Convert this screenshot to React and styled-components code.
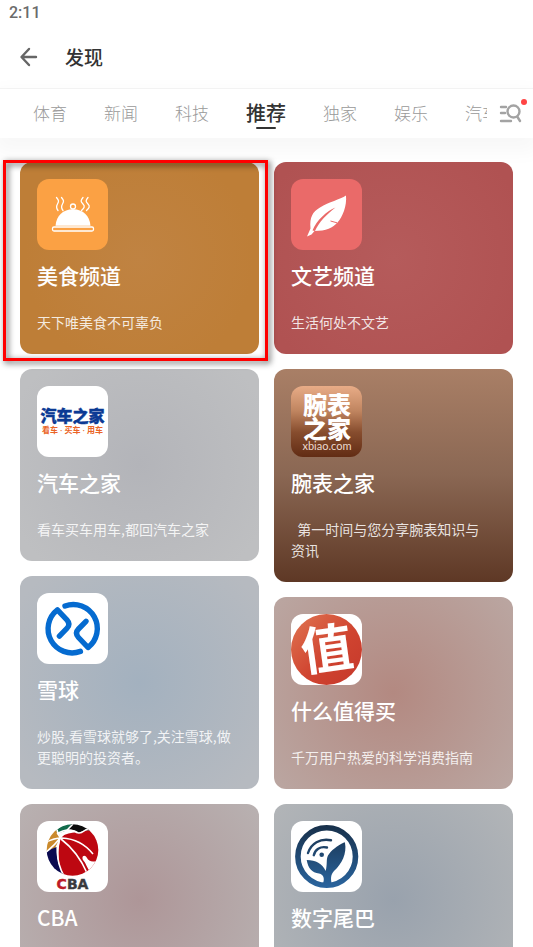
import React, {useState} from 'react'
import styled, {createGlobalStyle} from 'styled-components'

const GlobalStyle = createGlobalStyle`
    * {
        box-sizing: border-box;
    }

    body {
        margin: 0;
        background: #fff;
        font-family: Roboto, "Noto Sans CJK SC", sans-serif;
    }
`;

const Screen = styled.div`
    display: flex;
    flex-direction: column;
    height: 100vh;
    overflow: hidden;
`;

const StatusBar = styled.div`
    flex-shrink: 0;
    padding: 3px 9px;
    font-size: 16px;
    font-weight: 500;
    line-height: 20px;
    color: #6b6b6b;
`;

const Header = styled.header`
    display: flex;
    flex-shrink: 0;
    align-items: center;
    gap: 26px;
    height: 63px;
    padding: 0 18px;
    border-bottom: 1px solid #f5f5f5;
`;

const IconButton = styled.button`
    display: flex;
    align-items: center;
    justify-content: center;
    padding: 0;
    border: none;
    background: none;
    color: ${props => props.$color};
    cursor: pointer;
`;

const PageTitle = styled.h1`
    margin: 0;
    font-family: "Noto Sans CJK SC", sans-serif;
    font-size: 19px;
    font-weight: 500;
    line-height: 28px;
    color: #333;
`;

const TabBar = styled.div`
    position: relative;
    display: flex;
    height: 49px;
    flex-shrink: 0;
    background: #fff;
    box-shadow: 0 8px 18px 6px rgba(0, 0, 0, 0.03);
`;

const Tabs = styled.nav`
    display: flex;
    flex: 1;
    align-items: center;
    gap: 37px;
    min-width: 0;
    padding-left: 33px;
    overflow: hidden;
`;

const Tab = styled.button`
    display: flex;
    flex-direction: column;
    flex-shrink: 0;
    align-items: center;
    padding: 0;
    border: none;
    background: none;
    font-family: "Noto Sans CJK SC", sans-serif;
    font-size: ${props => props.$active ? "20px" : "17px"};
    font-weight: ${props => props.$active ? 500 : 300};
    line-height: 28px;
    color: ${props => props.$active ? "#333" : "#999"};
    cursor: pointer;

    &::after {
        content: "";
        width: 20px;
        height: 2px;
        border-radius: 1px;
        background: ${props => props.$active ? "#333" : "transparent"};
    }
`;

const TabTools = styled.div`
    display: flex;
    align-items: center;
    padding: 0 11px 0 12px;
`;

const SearchWrap = styled.div`
    position: relative;
`;

const RedDot = styled.span`
    position: absolute;
    top: -4px;
    right: -5px;
    width: 6px;
    height: 6px;
    border-radius: 50%;
    background: #ff4444;
`;

const Feed = styled.main`
    display: grid;
    grid-template-columns: 1fr 1fr;
    gap: 15px;
    align-items: start;
    padding: 24px 20px;
`;

const Column = styled.div`
    display: flex;
    flex-direction: column;
    gap: 15px;
`;

const CardLink = styled.a`
    position: relative;
    display: flex;
    flex-direction: column;
    min-height: 192px;
    padding: 17px 20px 21px 17px;
    border-radius: 12px;
    background: ${props => props.$background};
    color: #fff;
    text-decoration: none;
`;

const Highlight = styled.span`
    position: absolute;
    z-index: 1;
    top: -2px;
    right: -9px;
    bottom: -7px;
    left: -17px;
    border: 3px solid #f00;
    filter: drop-shadow(2px 2px 3px rgba(0, 0, 0, 0.7));
    pointer-events: none;
`;

const Logo = styled.svg`
    display: block;
    width: 71px;
    height: 71px;
    border-radius: 12px;
    background: ${props => props.$background || "#fff"};
`;

const CardTitle = styled.h2`
    margin: 10px 0 22px;
    font-family: "Noto Sans CJK SC", sans-serif;
    font-size: 21px;
    font-weight: 500;
    line-height: 30px;
`;

const CardText = styled.p`
    margin: 0;
    font-family: "Noto Sans CJK SC", sans-serif;
    font-size: 14px;
    font-weight: 400;
    line-height: 21px;
    white-space: pre-wrap;
    color: rgba(255, 255, 255, 0.85);
`;

const cjk = '"Noto Sans CJK SC", sans-serif'

const FoodLogo = () => (
    <Logo viewBox="0 0 71 71" $background="#fba144" aria-hidden="true">
        <g fill="none" stroke="#fff" strokeWidth="1.3" strokeLinecap="round">
            <path d="M19.5 18.5c2.5 3 2.5 4 1 6.5s-1.5 4 .5 6.5" />
            <path d="M24.5 18.5c2.5 3 2.5 4 1 6.5s-1.5 4 .5 6.5" />
            <path d="M46 18.5c-2.5 3-2.5 4 0 6.5s1 4-1.5 6.5" />
            <path d="M51 18.5c-2.5 3-2.5 4 0 6.5s1 4-1.5 6.5" />
            <circle cx="36" cy="27.5" r="2.5" />
            <rect x="15.5" y="48" width="41" height="4" rx="1.5" />
        </g>
        <path d="M18.5 46.8C19.5 36.5 26 30.3 36 30.3s16.5 6.2 17.5 16.5z" fill="#fff" />
    </Logo>
)

const LeafLogo = () => (
    <Logo viewBox="0 0 71 71" $background="#ea6a69" aria-hidden="true">
        <path
            d="M55 16.5C49 20.5 38 23 29 28.5C21.5 33 18.5 38 19.5 49.5L16 57.5L20.5 55.5L23.5 52C35 52 42 48.5 46.5 43.5C51.5 38 56 27 55 16.5Z"
            fill="#fff"
        />
        <path d="M44.5 28.5C36 32 25.5 41 21.5 51.5L24 52C28 43 36 35 44.5 28.5Z" fill="#ea6a69" />
        <path d="M39.5 42l6.5 1.8" stroke="#ea6a69" strokeWidth="1" />
    </Logo>
)

const AutoLogo = () => (
    <Logo viewBox="0 0 71 71" role="img" aria-label="汽车之家">
        <text
            x="35.5" y="36" textAnchor="middle" fontFamily={cjk} fontSize="16" fontWeight="900"
            fill="#0b3a94" stroke="#0b3a94" strokeWidth="0.4"
        >汽车之家</text>
        <text
            x="35.5" y="47" textAnchor="middle" fontFamily={'Roboto, ' + cjk} fontSize="8" fontWeight="700"
            fill="#ea6426"
        >看车 · 买车 · 用车</text>
    </Logo>
)

const WatchLogo = () => (
    <Logo
        viewBox="0 0 71 71" role="img" aria-label="腕表之家"
        $background="linear-gradient(#e8ac87, #c08560 35%, #874d2e 65%, #622c14)"
    >
        <g fontFamily={cjk} fontSize="24" fontWeight="900" textAnchor="middle" fill="#fff">
            <text x="36" y="28">腕表</text>
            <text x="36" y="52">之家</text>
        </g>
        <text x="36" y="64" textAnchor="middle" fontFamily="Lato, sans-serif" fontSize="11" fill="#ecd9ce">xbiao.com</text>
    </Logo>
)

const SnowballLogo = () => (
    <Logo viewBox="0 0 71 71" aria-hidden="true">
        <g fill="none" stroke="#056bd0" strokeWidth="5.4" strokeLinecap="round" strokeLinejoin="round">
            <path d="M28 13A24 24 0 0 1 51 54.5L41.5 44.5Q37.5 40 41.5 36L49 28.3" />
            <path d="M43.4 58.4A24 24 0 0 1 20.4 16.9L29.9 26.9Q33.9 31.4 29.9 35.4L22.4 43.1" />
        </g>
    </Logo>
)

const WorthLogo = () => (
    <Logo viewBox="0 0 71 71" role="img" aria-label="值">
        <defs>
            <linearGradient id="worth" x1="0" y1="0" x2="1" y2="1">
                <stop offset="0.1" stopColor="#dd6d4c" />
                <stop offset="0.55" stopColor="#d04430" />
                <stop offset="1" stopColor="#c5382b" />
            </linearGradient>
        </defs>
        <circle cx="35.5" cy="35.5" r="35.5" fill="url(#worth)" />
        <text
            x="36" y="54" textAnchor="middle" fontFamily={cjk} fontSize="52" fontWeight="700"
            fill="#fff" transform="rotate(-8 36 36)"
        >值</text>
    </Logo>
)

const CbaLogo = () => (
    <Logo viewBox="0 0 71 71" role="img" aria-label="CBA">
        <defs>
            <clipPath id="ball">
                <circle cx="35.5" cy="29" r="25.8" />
            </clipPath>
        </defs>
        <g clipPath="url(#ball)">
            <path d="M24 16C34 9 45 13 52 8L64 8V56H26C21 44 20 30 24 16Z" fill="#bd0711" />
            <path d="M8 20L19 8L23.5 16L18 27L8 31Z" fill="#ca8a2c" />
            <path d="M8 32Q13 28 19.5 26Q19 42 28 56H8Z" fill="#0a0a50" />
            <path d="M19 10L27 2H36L31 9L22 12Z" fill="#126b4c" />
            <path d="M30 9L36 1L56 4L53 10Q47 8 42 12Q38 8 30 9Z" fill="#0c0c0c" />
            <path d="M64 38C57 42 52 41 50 37C48 33 44 35 46 39C49 42 50 47 53 51L55 56H66Z" fill="#fff" />
            <g fill="none" stroke="#fff" strokeWidth="1.6">
                <path d="M20 9Q21 14 24 18" />
                <path d="M20 13Q29 7 37 10Q42 14 47 10T56 12" />
                <path d="M8 22Q16 17 25 17Q44 18 56 33" />
                <path d="M8 32Q18 24 24 16Q30 9 36 3" />
                <path d="M24 18Q41 31 50 52" />
                <path d="M22 20Q17 38 28 57" />
            </g>
        </g>
        <text
            x="35.5" y="68" textAnchor="middle" fontFamily='"DejaVu Sans", sans-serif' fontSize="14"
            fontWeight="700" fill="#3a3a3e" stroke="#3a3a3e" strokeWidth="0.4"
        ><tspan fill="#bd1c26" stroke="#bd1c26">C</tspan>BA</text>
    </Logo>
)

const TailLogo = () => (
    <Logo viewBox="0 0 71 71" aria-hidden="true">
        <defs>
            <linearGradient id="tail" gradientUnits="userSpaceOnUse" x1="0" y1="4" x2="0" y2="67">
                <stop offset="0" stopColor="#18304a" />
                <stop offset="1" stopColor="#2a659f" />
            </linearGradient>
        </defs>
        <circle cx="35.7" cy="35.5" r="28.8" fill="none" stroke="url(#tail)" strokeWidth="5.6" />
        <path
            d="M53 21.5C46 25 40 29.5 37 34.5C35 38 36.5 43 34.7 50C31 42 25 39.5 15.7 39C17 47 21 52 28 52.5C33 53.5 34 58 31.5 64H41C39.5 58 39.5 54 43 50C51 43 56 32 54 22Q53.8 21 53 21.5Z"
            fill="url(#tail)"
        />
        <circle cx="30.7" cy="33.7" r="2.3" fill="url(#tail)" />
        <g fill="none" stroke="url(#tail)" strokeWidth="2.4" strokeLinecap="round">
            <path d="M17 32C20 22.5 29 17 40 19.2" />
            <path d="M22.8 34.2C24 28.5 29 25 36 26.5" />
        </g>
    </Logo>
)

const leftCards = [
    {
        title: '美食频道', text: '天下唯美食不可辜负', logo: FoodLogo, highlighted: true,
        background: 'radial-gradient(circle, #c08342, #be7e37 75%)'
    },
    {
        title: '汽车之家', text: '看车买车用车,都回汽车之家', logo: AutoLogo,
        background: 'radial-gradient(circle, #b3b4b9, #bebfc1 90%)'
    },
    {
        title: '雪球', text: '炒股,看雪球就够了,关注雪球,做更聪明的投资者。', logo: SnowballLogo,
        background: 'radial-gradient(circle, #a3b1bf, #b6bac0 90%)'
    },
    {
        title: 'CBA', logo: CbaLogo,
        background: 'radial-gradient(circle, #ae9698, #b8b0b0 95%)'
    }
]

const rightCards = [
    {
        title: '文艺频道', text: '生活何处不文艺', logo: LeafLogo,
        background: 'radial-gradient(circle, #b55b5b, #b05252 90%)'
    },
    {
        title: '腕表之家', text: '  第一时间与您分享腕表知识与资讯', logo: WatchLogo,
        background: 'linear-gradient(#a97f66, #8a6753 50%, #5e3825)'
    },
    {
        title: '什么值得买', text: '千万用户热爱的科学消费指南', logo: WorthLogo,
        background: 'radial-gradient(circle, #b38981, #baa5a0 95%)'
    },
    {
        title: '数字尾巴', logo: TailLogo,
        background: 'radial-gradient(circle, #99a2ad, #b1b4b7 95%)'
    }
]

const tabs = ['体育', '新闻', '科技', '推荐', '独家', '娱乐', '汽车']

function Card(props) {
    const {title, text, logo: CardLogo, background, highlighted} = props.card

    return (
        <CardLink href="#" $background={background}>
            <CardLogo />
            <CardTitle>{title}</CardTitle>
            {text && <CardText>{text}</CardText>}
            {highlighted && <Highlight />}
        </CardLink>
    )
}

export default function App() {
    const [active, setActive] = useState('推荐')

    return (
        <Screen>
            <GlobalStyle />
            <StatusBar>2:11</StatusBar>
            <Header>
                <IconButton $color="#666" aria-label="返回">
                    <svg width="21" height="22" viewBox="0 0 21 22" fill="none" stroke="currentColor" strokeWidth="2.4">
                        <path d="M18 11H4M11 3L3.5 11L11 19" strokeLinecap="round" strokeLinejoin="round" />
                    </svg>
                </IconButton>
                <PageTitle>发现</PageTitle>
            </Header>
            <TabBar>
                <Tabs>
                    {tabs.map(tab => (
                        <Tab key={tab} $active={tab === active} onClick={() => setActive(tab)}>{tab}</Tab>
                    ))}
                </Tabs>
                <TabTools>
                    <SearchWrap>
                        <IconButton $color="#a3a3a3" aria-label="搜索频道">
                            <svg width="23" height="22" viewBox="0 0 23 22" fill="none" stroke="currentColor" strokeWidth="2.4" strokeLinecap="round">
                                <path d="M2 4H7M2 10H6M2 18H12M18.5 14L21 18" />
                                <circle cx="14.500" cy="8.5" r="6" />
                            </svg>
                        </IconButton>
                        <RedDot />
                    </SearchWrap>
                </TabTools>
            </TabBar>
            <Feed>
                <Column>
                    {leftCards.map(card => <Card key={card.title} card={card} />)}
                </Column>
                <Column>
                    {rightCards.map(card => <Card key={card.title} card={card} />)}
                </Column>
            </Feed>
        </Screen>
    )
}
